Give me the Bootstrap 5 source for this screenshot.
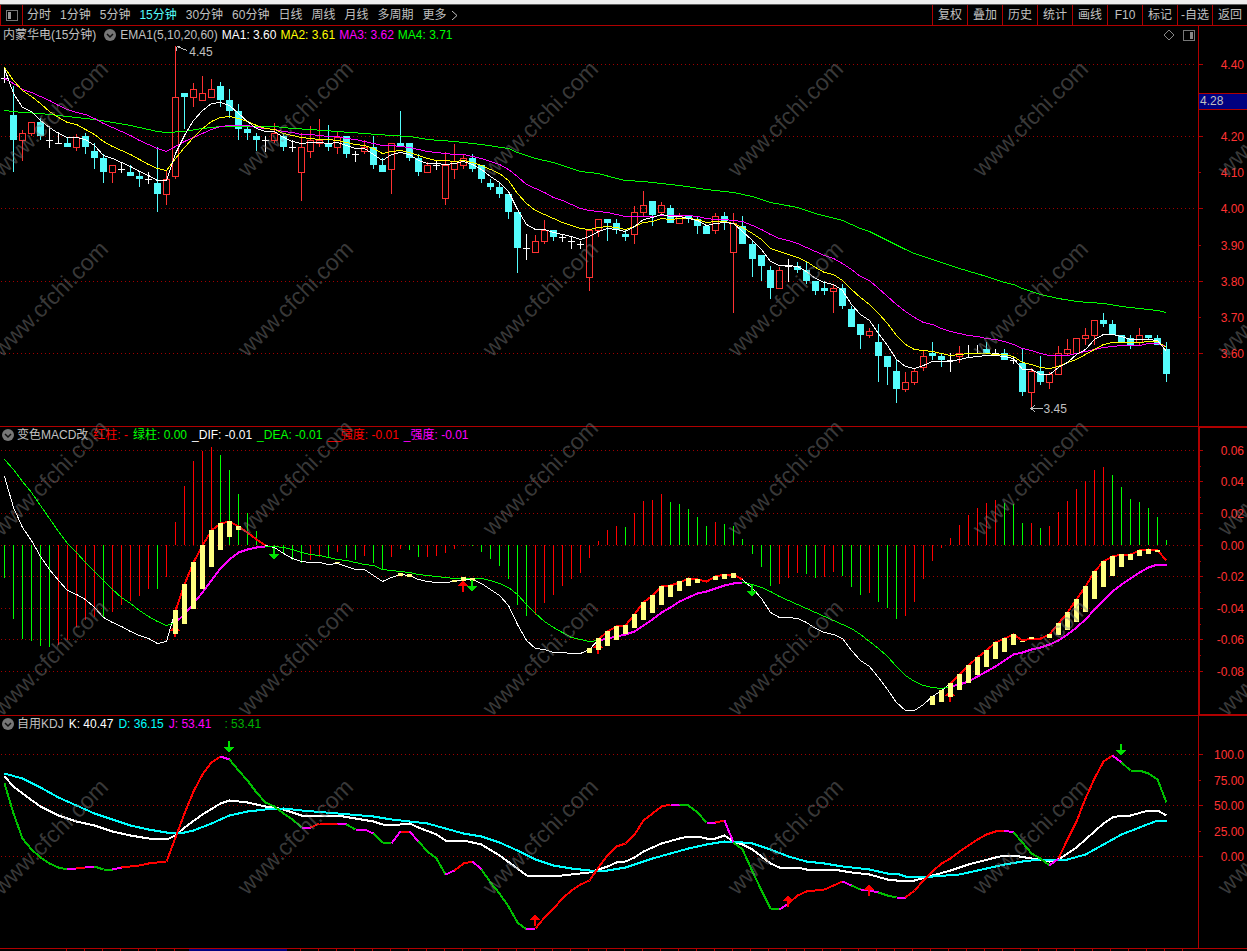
<!DOCTYPE html>
<html lang="zh-CN">
<head>
<meta charset="utf-8">
<meta name="viewport" content="width=device-width, initial-scale=1">
<title>内蒙华电 15分钟</title>
<link href="https://cdn.jsdelivr.net/npm/bootstrap@5.3.0/dist/css/bootstrap.min.css" rel="stylesheet">
<style>
:root{--line:#b00000;--txt:#c0c0c0}
body{background:#000;color:var(--txt);font:12px/16px "Liberation Sans","Noto Sans CJK SC",sans-serif}
.topstrip{height:5px;background:#eee;border-bottom:1px solid #606060}
.toolbar{height:21px;border-bottom:1px solid var(--line)}
.toolbar button{background:none;border:0;padding:1px 0 0;color:inherit;font:inherit;line-height:19px;white-space:nowrap}
.toolbar .dock{width:23px;border-left:1px solid var(--line);border-right:1px solid var(--line);line-height:0}
.periods{gap:9px;padding-left:4px}
.periods button.current{color:#54fcfc}
.actions button{width:35px;border-left:1px solid var(--line)}
.pane{min-height:0}
.pane + .pane .plot{border-top:1px solid var(--line)}
.p-price{flex:400 1 0}
.p-macd{flex:289 1 0}
.p-kdj{flex:233 1 0}
.plot svg.chart{position:absolute;left:0;right:0;top:0;bottom:0;width:100%;height:100%}
.pane + .pane .plot svg.chart{top:-1px;height:calc(100% + 1px)}
.info{gap:4px;height:18px;line-height:18px;white-space:nowrap;position:relative;z-index:1}
.pane + .pane .info{margin-top:-1px;gap:5px}
.pane + .pane .info svg{margin-right:-2px}
.axis{width:49px;border-left:1px solid var(--line);color:#ff3232}
.axis.picked{border:2px solid var(--line);border-right:0;margin-bottom:-1px;z-index:1}
.axis.picked .scale{left:-1px;top:-2px;bottom:-1px}
.scale{position:absolute;left:0;right:0;top:0;bottom:0}
.scale span{position:absolute;left:0;right:0;padding-right:3px;height:16px;margin-top:-8px;text-align:right}
.scale i{position:absolute;left:0;height:1px;width:4px;background:var(--line)}
.scale i.minor{width:2px}
.flag{position:absolute;left:0;right:0;height:17px;margin-top:-8px;background:#000080;border-top:1px solid var(--line);border-bottom:1px solid var(--line);color:var(--txt);line-height:15px;padding-left:1px}
.note{position:absolute;margin-top:-8px}
.timebar{height:3px;border-top:1px solid var(--line)}
.timebar svg{display:block}
.stamp{position:absolute;left:0;top:0;width:100%;height:100%;pointer-events:none;z-index:5}
.stamp text{font-size:23px;fill:#808080;fill-opacity:.45}
.c-w{color:#fff}.c-y{color:#ff0}.c-m{color:#f0f}.c-g{color:#0f0}.c-r{color:#f00}.c-c{color:#0ff}.c-d{color:#00b000}
</style>
</head>
<body>
<div class="d-flex flex-column vh-100 position-relative overflow-hidden">
  <div class="topstrip flex-shrink-0"></div>
  <header class="toolbar d-flex flex-shrink-0">
    <button class="dock" type="button" aria-label="侧栏"><svg width="12" height="11" fill="none" shape-rendering="crispEdges"><rect x=".5" y=".5" width="11" height="10" rx="1" stroke="#777"/><rect x="2" y="2" width="3" height="7" fill="#999"/></svg></button>
    <nav class="periods d-flex flex-grow-1">
      <button type="button">分时</button><button type="button">1分钟</button><button type="button">5分钟</button><button type="button" class="current">15分钟</button><button type="button">30分钟</button><button type="button">60分钟</button><button type="button">日线</button><button type="button">周线</button><button type="button">月线</button><button type="button">多周期</button><button type="button">更多<svg class="ms-1" width="7" height="9" fill="none" stroke="#c0c0c0"><path d="M1 0l5 4.500-5 4.500"/></svg></button>
    </nav>
    <div class="actions d-flex">
      <button type="button">复权</button><button type="button">叠加</button><button type="button">历史</button><button type="button">统计</button><button type="button">画线</button><button type="button">F10</button><button type="button">标记</button><button type="button">-自选</button><button type="button">返回</button>
    </div>
  </header>

  <section class="pane p-price d-flex">
    <div class="plot flex-grow-1 position-relative">
      <svg class="chart" id="price" viewBox="0 26 1198 400" preserveAspectRatio="none"></svg>
      <div class="info d-flex align-items-center" style="padding-left:3px">
        <span class="me-1">内蒙华电(15分钟)</span>
        <svg width="12" height="12"><circle cx="6" cy="6" r="6" fill="#777"/><path d="M3 5l3 3 3-3" fill="none" stroke="#111" stroke-width="1.500"/></svg>
        <span>EMA1(5,10,20,60)</span><span class="c-w">MA1: 3.60</span><span class="c-y">MA2: 3.61</span><span class="c-m">MA3: 3.62</span><span class="c-g">MA4: 3.71</span>
        <svg class="ms-auto me-1" width="12" height="12" fill="none" stroke="#888"><path d="M6 1l5 5-5 5-5-5z"/></svg>
        <svg width="12" height="11" fill="none" shape-rendering="crispEdges" style="margin-right:3px"><rect x=".5" y=".5" width="11" height="10" rx="1" stroke="#777"/><rect x="7" y="2" width="3" height="7" fill="#888"/></svg>
      </div>
      <span class="note" style="left:15.8%;top:6.500%">4.45</span>
      <span class="note" style="left:87.100%;top:95.800%">3.45</span>
    </div>
    <div class="axis position-relative flex-shrink-0"><div class="scale" id="priceScale"></div></div>
  </section>

  <section class="pane p-macd d-flex">
    <div class="plot flex-grow-1 position-relative">
      <svg class="chart" id="macd" viewBox="0 426 1198 289" preserveAspectRatio="none"></svg>
      <div class="info d-flex align-items-center" style="padding-left:2px">
        <svg width="12" height="12"><circle cx="6" cy="6" r="6" fill="#777"/><path d="M3 5l3 3 3-3" fill="none" stroke="#111" stroke-width="1.500"/></svg>
        <span>变色MACD改</span><span class="c-r">红柱: -</span><span class="c-g">绿柱: 0.00</span><span class="c-w">_DIF: -0.01</span><span class="c-g">_DEA: -0.01</span><span class="c-r">__强度: -0.01</span><span class="c-m">_强度: -0.01</span>
      </div>
    </div>
    <div class="axis picked position-relative flex-shrink-0"><div class="scale" id="macdScale"></div></div>
  </section>

  <section class="pane p-kdj d-flex">
    <div class="plot flex-grow-1 position-relative">
      <svg class="chart" id="kdj" viewBox="0 715 1198 233" preserveAspectRatio="none"></svg>
      <div class="info d-flex align-items-center" style="padding-left:2px">
        <svg width="12" height="12"><circle cx="6" cy="6" r="6" fill="#777"/><path d="M3 5l3 3 3-3" fill="none" stroke="#111" stroke-width="1.500"/></svg>
        <span>自用KDJ</span><span class="c-w">K: 40.47</span><span class="c-c">D: 36.15</span><span class="c-m">J: 53.41</span><span class="c-d ms-2">: 53.41</span>
      </div>
    </div>
    <div class="axis position-relative flex-shrink-0"><div class="scale" id="kdjScale"></div></div>
  </section>

  <footer class="timebar flex-shrink-0"><svg width="100%" height="2" shape-rendering="crispEdges"><defs><pattern id="tk" x="12" width="18" height="2" patternUnits="userSpaceOnUse"><rect width="1" height="2" fill="#b00000"/></pattern></defs><rect x="60" width="1135" height="2" fill="url(#tk)"/><rect x="189" width="98" height="2" fill="#000080"/></svg></footer>
  <svg class="stamp" id="stamp" aria-hidden="true"></svg>
</div>

<script src="https://cdn.jsdelivr.net/npm/bootstrap@5.3.0/dist/js/bootstrap.bundle.min.js"></script>
<script>
const X = i => 4 + 9 * i + (i >= 83 ? 1 : 0);
const rect = (x, y, w, h, f) => `<rect x="${x}" y="${y}" width="${w}" height="${h}" fill="${f}"/>`;
const line = (pts, color, w = 1) => `<polyline points="${pts.map(p => (X(p[0]) + .5) + ',' + (p[1] + .5)).join(' ')}" fill="none" stroke="${color}" stroke-width="${w}"/>`;
const seq = (s, from = 0) => s.trim().split(/\s+/).map((v, k) => [k + from, +v]);
const pairs = s => s.trim().split(/\s+/).map(p => p.split(':').map(Number));
const grid = ys => ys.map(y => `<path d="M1 ${y + .5}H1196" stroke="#a00000" stroke-dasharray="1 3"/>`).join('');
const wrap = s => `<g shape-rendering="crispEdges">${s}</g>`;
const down = (x, y) => `<path d="M${x - 1} ${y - 12}h2v6h4l-5 6-5-6h4z" fill="#00e000"/>`;
const up = (x, y) => `<path d="M${x} ${y}l5 6h-4v6h-2v-6h-4z" fill="#f00"/>`;

/* candles: kind, high, body top, body bottom, low */
const candles = `w 68 78 78 82|c 86 115 140 172|r 130 133 140 161|r 122 122 133 136|c 118 122 136 140|w 126 140 140 147|w 132 143 143 143|c 137 143 147 147|r 134 137 147 151|c 133 136 147 154|c 143 151 158 169|c 154 158 172 183|r 165 165 172 183|w 162 169 169 172|c 165 172 176 176|c 172 176 179 187|w 172 179 179 183|c 147 183 194 212|r 171 179 194 205|r 46 97 176 179|c 93 93 97 129|r 83 89 97 107|r 76 93 100 100|r 79 89 97 97|c 82 86 100 107|c 89 100 111 118|c 104 111 129 140|c 126 129 133 140|c 133 136 140 151|w 136 140 140 151|r 123 133 140 143|c 133 136 147 151|w 140 147 147 151|r 133 147 172 201|r 126 140 151 158|r 119 140 143 147|c 125 143 147 151|r 131 137 147 154|c 136 136 154 158|w 151 154 154 161|r 140 147 151 154|c 136 147 165 169|c 158 165 172 172|r 143 143 169 194|c 111 143 147 147|c 143 143 158 161|c 154 158 172 176|r 162 165 172 172|w 161 165 165 169|r 152 165 198 205|r 144 161 169 179|r 154 158 165 169|c 154 158 169 172|c 165 165 179 183|c 179 183 187 190|c 183 187 194 198|c 194 194 212 219|c 212 212 248 273|w 234 248 248 259|r 235 241 252 252|r 220 230 241 244|c 230 230 237 241|w 234 237 237 241|w 237 241 241 248|w 241 244 244 248|r 230 230 277 291|r 219 219 230 237|c 219 219 223 241|c 219 223 230 234|c 230 234 237 241|r 206 212 234 244|r 191 205 212 216|c 201 201 215 226|r 202 205 212 216|c 205 208 223 223|r 213 216 223 223|c 215 216 219 223|c 216 219 226 234|c 226 226 234 234|r 213 216 230 234|c 212 216 221 230|r 213 223 252 313|c 216 226 244 244|c 241 244 259 277|c 255 255 266 281|c 266 270 288 299|r 267 270 288 288|w 259 266 266 281|c 262 266 270 273|c 262 270 281 284|c 281 281 291 295|c 281 288 291 295|r 284 288 291 313|c 284 288 306 309|c 306 309 327 327|c 324 324 335 349|r 328 331 335 338|c 324 342 356 382|c 356 356 367 385|c 359 371 389 403|r 372 382 389 392|r 369 371 382 385|r 350 356 367 371|c 342 353 356 360|c 354 356 360 367|w 353 360 360 371|r 346 353 356 363|w 345 353 353 357|w 345 353 353 353|c 342 349 354 354|w 349 353 353 354|c 349 353 360 360|w 357 360 360 363|c 349 363 392 396|r 368 371 392 407|c 356 371 382 385|r 372 374 382 389|r 346 353 374 374|r 339 349 353 356|r 338 338 353 353|r 328 335 338 345|r 320 320 335 345|c 313 320 324 327|c 320 324 335 335|c 335 335 343 343|c 335 338 345 349|r 328 335 342 345|c 335 335 338 339|c 335 338 345 345|c 342 349 374 382`.split('|');
let s = grid([64, 136, 208, 281, 353]);
candles.forEach((c, i) => {
  let [k, h, t, b, l] = c.split(' '); h = +h; t = +t; b = +b; l = +l;
  const x = X(i);
  if (k === 'c') s += rect(x, h, 1, l - h, '#54fcfc') + rect(x - 3, t, 7, b - t, '#54fcfc');
  else if (k === 'w') s += rect(x, h, 1, l - h + 1, '#fff') + rect(x - 3, t, 7, 1, '#fff');
  else s += rect(x, h, 1, t - h, '#ff3232') + rect(x, b, 1, l - b, '#ff3232') + `<rect x="${x - 2.5}" y="${t + .5}" width="6" height="${b - t}" fill="none" stroke="#ff3232"/>`;
});
s += line(pairs(`0:110 2:112 4:113 6:115 8:117 10:119 12:122 14:125 16:129 17:131 18:132 20:131 22:128 24:126 30:126 32:128 34:129 37:131 40:133 43:135 45:136 47:139 50:141 53:144 56:148 57:152 59:158 61:162 64:171 66:173 68:178 69:180 71:181 75:185 78:189 81:192 83:196 85:202 88:207 90:213 93:220 95:228 96:231 98:240 100:249 101:253 103:259 106:268 109:276 111:282 112:284 113:288 115:294 117:298 119:301 122:303 124:306 126:308 128:310 129:312`), '#0f0');
s += line(seq(`78 83 89 92 96 100 105 109 112 114 118 123 127 131 135 140 144 148 151 146 141 137 133 129 126 125 125 125 127 128 129 131 132 134 134 135 136 136 138 139 141 143 145 145 146 147 149 151 152 153 154 154 156 158 161 164 169 176 184 188 192 197 200 204 208 210 211 212 214 216 216 216 216 215 215 215 215 216 218 219 219 220 221 225 229 234 238 240 243 247 251 255 258 263 269 276 280 288 296 304 311 317 322 324 328 331 333 335 336 338 339 341 344 348 350 353 355 355 355 353 351 349 347 346 345 345 345 343 343 346`), '#f0f');
s += line(seq(`67 80 90 96 103 111 117 122 124 129 134 141 146 150 154 159 164 168 170 158 147 137 128 121 117 116 118 121 125 128 129 133 135 137 138 139 139 140 142 144 145 148 153 151 150 152 155 158 160 160 161 160 162 165 169 173 180 193 203 210 214 218 222 225 228 229 227 226 227 229 226 222 221 218 219 218 218 219 222 221 221 223 227 233 239 248 251 254 257 261 267 272 274 280 289 297 304 313 323 335 344 349 350 351 353 355 354 353 353 353 354 354 356 362 364 367 368 366 362 359 354 349 344 342 342 342 342 341 341 347`), '#ff0');
s += line(seq(`68 93 107 111 120 127 133 137 137 139 145 155 158 162 166 171 175 180 180 153 135 120 110 103 102 105 113 121 128 131 131 137 141 143 142 142 143 142 145 148 148 154 160 154 152 154 160 163 163 164 163 161 164 169 176 182 191 209 224 229 229 232 234 236 239 236 231 228 229 231 226 219 217 214 216 216 218 220 225 223 222 223 231 240 249 261 265 265 266 271 278 282 284 290 304 314 320 333 345 359 366 368 365 361 361 361 359 357 356 355 355 356 358 369 369 374 374 367 362 354 349 339 334 334 336 339 339 339 340 351`), '#fff');
s += `<path d="M176.500 46.500v4M176.500 46.500h3M177 46.500l10 4" stroke="#c0c0c0" fill="none"/><path d="M1032 408.500h11M1035 405l-4 3.500 4 3.500" stroke="#c0c0c0" fill="none"/>`;
document.getElementById('price').innerHTML = wrap(s);

/* MACD: histogram ends are measured from the zero line at 545 */
const hist = `g578 g619 g639 g641 g646 g647 r645 r640 r627 r620 r617 g617 r612 r605 r601 r596 r589 g589 r577 r522 r486 r461 r451 r447 g455 g470 g494 g513 g531 g544 g547 g553 g560 g563 r560 r557 g557 r552 g558 g560 r556 g563 g569 r557 r549 g550 g557 r557 r556 r553 r549 r546 g546 g552 g559 g566 g579 g605 g616 r615 r603 r595 r586 r579 r573 r558 r541 r530 r526 g527 r513 r501 r500 r494 g502 g504 g509 g517 g526 r522 g524 g526 g539 g554 g567 g586 r584 r578 r573 g574 g578 r577 r572 g576 g587 g595 r593 g602 g608 g619 r616 r602 r579 r561 r548 r538 r525 r515 r508 r503 r500 g503 g504 g523 r523 g528 r526 r512 r501 r489 r481 r470 r467 g475 g487 g499 g502 g508 g517 g540`.split(' ');
const dif = seq(`476 507 527 540 556 569 580 590 594 599 607 617 622 626 631 635 638 643 641 610 584 562 545 530 523 521 526 532 539 545 547 553 558 561 562 562 564 563 566 569 569 575 581 577 574 575 579 581 582 582 581 579 579 583 589 595 605 624 640 648 649 652 652 653 653 649 639 631 626 625 614 602 595 586 585 582 578 579 581 576 574 574 579 588 598 612 617 617 618 622 628 632 634 638 650 660 666 677 689 702 710 710 704 696 690 683 674 665 657 650 642 638 634 640 638 638 634 623 612 599 586 571 561 556 554 554 550 549 550 560`);
const dea = seq(`459 469 481 492 505 518 531 543 552 562 571 580 589 597 603 610 616 621 625 622 614 603 592 580 568 559 552 549 547 546 546 547 549 552 554 555 557 559 560 562 564 565 569 570 571 572 574 575 576 577 578 578 578 578 580 583 587 594 604 613 621 627 632 637 639 641 640 638 636 634 631 625 619 612 607 601 597 593 591 588 585 583 582 584 587 591 596 600 604 608 612 616 620 624 628 634 641 648 656 666 675 681 685 687 688 686 684 681 676 671 666 660 654 652 649 647 644 640 634 627 619 609 600 591 584 578 572 567 564 564`);
let m = grid([450, 481, 513, 545, 576, 608, 639, 671]);
hist.forEach((h, i) => {
  const y = +h.slice(1);
  m += rect(X(i), Math.min(545, y), 1, Math.abs(545 - y) || 1, h[0] === 'g' ? '#0f0' : '#f00');
});
m += line(dif, '#fff') + line(dea, '#0f0');
[[19, 29], [66, 82], [105, 129]].forEach(([a, b]) => {
  m += line(dea.slice(a, b + 1), '#f0f', 2) + line(dif.slice(a, b + 1), '#f00', 2);
});
m += up(175, 625) + up(463, 580) + up(598, 642) + up(950, 690);
pairs(`19:610:634 20:584:624 21:562:609 22:545:589 23:530:567 24:523:550 25:521:537 26:526:530 37:562:563 44:573:576 45:574:577 50:580:582 51:577:581 52:578:581 65:648:653 66:638:650 67:631:646 68:626:640 69:625:634 70:614:628 71:602:620 72:595:613 73:586:605 74:585:597 75:581:591 76:578:586 77:579:583 79:576:580 80:574:579 81:573:578 103:696:705 104:690:702 105:683:697 106:674:690 107:665:683 108:657:675 109:650:667 110:642:659 111:638:652 112:634:645 113:641:642 114:637:639 116:634:638 117:623:635 118:612:630 119:599:622 120:586:612 121:571:599 122:561:587 123:556:576 124:554:567 125:554:560 126:550:556 127:549:554 128:550:552`)
  .forEach(([i, a, b]) => m += rect(X(i) - 2, a, 5, b - a, '#ffff80'));
m += down(274, 560) + down(472, 592) + down(752, 597);
document.getElementById('macd').innerHTML = wrap(m);

/* KDJ */
const d = pairs(`0:773 2:778 4:787 6:797 8:805 10:813 12:819 14:825 16:829 18:832 20:832 21:830 23:823 25:815 27:811 29:809 31:808 33:810 37:813 41:816 43:819 47:823 49:828 51:833 53:836 55:842 57:850 59:859 61:865 63:868 65:870 67:870 69:867 70:864 72:858 74:853 76:848 78:844 80:841 82:842 83:843 85:849 87:856 89:861 91:863 93:866 96:869 98:873 99:873 100:876 103:876 106:874 109:868 111:864 113:861 115:859 118:859 120:854 122:844 124:834 126:827 128:820 129:820`);
const k = pairs(`0:776 1:786 2:793 4:806 6:815 8:821 10:825 12:831 14:835 16:838 18:839 19:835 20:827 22:814 24:803 25:800 27:802 29:806 30:807 31:809 33:815 37:815 39:818 41:821 42:824 43:825 45:823 46:827 48:834 49:840 51:840 53:844 55:855 57:868 58:875 60:876 62:875 64:873 65:872 67:866 68:862 69:861 70:857 71:851 73:843 75:838 76:836 77:836 78:838 79:838 80:835 81:841 82:844 83:849 85:863 86:867 88:867 89:869 92:869 94:872 96:874 98:879 99:880 101:880 103:875 105:870 107:864 110:857 111:855 112:855 114:858 116:861 117:859 119:847 121:831 122:823 123:817 124:815 125:815 127:810 128:810 129:815`);
const j = `g783 g813 g838 g849 g857 g863 g867 g869 m868 r867 m866 g869 g869 m867 r866 r865 r863 r862 r861 r837 r813 r791 r774 r762 r756 m759 g770 g780 g792 g802 g806 g813 g819 g827 m827 r823 r823 r823 m824 g829 m829 m833 g842 g843 m831 r831 m841 g851 g858 g874 m870 r863 r861 m869 g882 g893 g906 g922 g929 m928 r917 r908 r898 r890 r884 r880 r867 r855 r846 r843 r834 r820 r813 r806 r804 m804 g805 g812 g822 m822 r820 m842 g849 g871 g890 g908 g909 m903 r895 r891 r890 r889 r885 r881 m885 g889 m890 m892 g895 g897 m897 r890 r880 r871 r863 r858 r851 r845 r839 r834 r831 r830 m832 g842 g853 g858 g865 m858 r839 r821 r798 r778 r761 r755 m762 g770 g770 g773 g779 g802`.split(' ').map(v => [v[0], +v.slice(1)]);
const tone = {r: '#f00', g: '#00c000', m: '#f0f'};
let q = grid([754, 805, 856]) + line(k, '#fff', 2) + line(d, '#0ff', 2);
for (let i = 1; i < j.length; i++) q += line([[i - 1, j[i - 1][1]], [i, j[i][1]]], tone[j[i][0]], 2);
q += down(229, 753) + down(1121, 756) + up(535, 914) + up(788, 895) + up(869, 884);
document.getElementById('kdj').innerHTML = wrap(q);

/* value scales */
function scale(id, top, height, rows, minors) {
  const pc = y => ((y - top) / height * 100) + '%';
  document.getElementById(id).innerHTML =
    rows.map(r => `<i class="${r[2] ? 'minor' : ''}" style="top:${pc(r[0])}"></i><span style="top:${pc(r[0] + 1)}">${r[1]}</span>`).join('') +
    minors.map(y => `<i class="minor" style="top:${pc(y)}"></i>`).join('');
  return pc;
}
const pc = scale('priceScale', 26, 400, [[64, '4.40'], [136, '4.20'], [172, '4.10', 1], [208, '4.00'], [245, '3.90', 1], [281, '3.80'], [317, '3.70', 1], [353, '3.60']], []);
document.getElementById('priceScale').insertAdjacentHTML('beforeend', `<div class="flag" style="top:${pc(101)}">4.28</div>`);
scale('macdScale', 426, 289, [[450, '0.06'], [481, '0.04'], [513, '0.02'], [545, '0.00'], [576, '-0.02'], [608, '-0.04'], [639, '-0.06'], [671, '-0.08']], [466, 497, 529, 561, 592, 624, 655]);
scale('kdjScale', 715, 233, [[754, '100.0'], [780, '75.00', 1], [805, '50.00'], [831, '25.00', 1], [856, '0.00']], []);

/* diagonal site stamp, repeated over the whole window */
let w = '';
for (let r = 0; r < 5; r++) for (let c = 0; c < 6; c++) {
  const x = 2 + 245 * c, y = 178 + Math.round(179.5 * r);
  w += `<text transform="translate(${x} ${y}) rotate(-45)">www.cfchi.com</text>`;
}
document.getElementById('stamp').innerHTML = w;
</script>
</body>
</html>
